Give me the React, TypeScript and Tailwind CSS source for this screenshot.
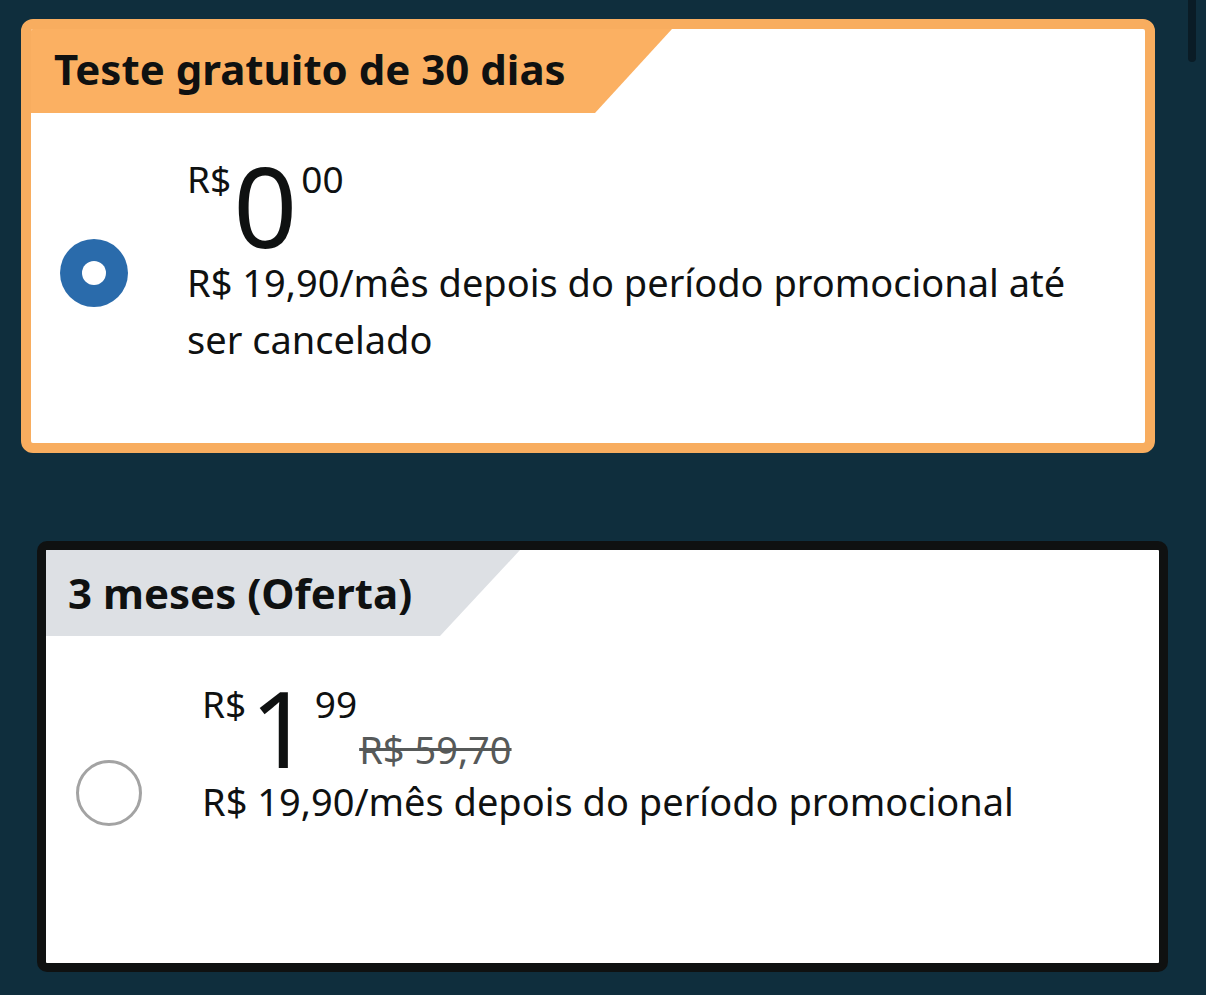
import React from 'react';

const font = { fontFamily: '"Noto Sans", "Open Sans", sans-serif' };

const Radio: React.FC<{ checked?: boolean }> = ({ checked }) =>
  checked ? (
    <div className="w-[68px] h-[68px] rounded-full bg-[#2a6bab] flex items-center justify-center shrink-0">
      <div className="w-[24px] h-[24px] rounded-full bg-white" />
    </div>
  ) : (
    <div className="w-[66px] h-[66px] rounded-full border-[3px] border-[#a3a3a3] bg-white shrink-0" />
  );

export default function App() {
  return (
    <div className="min-h-[995px] w-[1206px] bg-[#0f2e3d] flex text-[#0f1111]" style={font}>
      <div className="flex flex-col">
        {/* free trial card */}
        <div className="ml-[21px] mt-[19px] w-[1134px] h-[434px] rounded-[12px] border-[10px] border-[#f8ad5f] bg-white overflow-hidden">
          <div className="h-[84px] w-[641px] bg-[#fbb062] [clip-path:polygon(0_0,100%_0,calc(100%-77px)_100%,0_100%)] flex items-center pl-[23px] pb-[4px]">
            <span className="text-[42px] font-bold leading-none">Teste gratuito de 30 dias</span>
          </div>
          <div className="flex pl-[29px] pt-[44px]">
            <div className="mt-[82px]">
              <Radio checked />
            </div>
            <div className="ml-[59px] flex flex-col">
              <div className="flex items-start">
                <span className="text-[37px] leading-none mt-[3px]">R$</span>
                <span className="text-[112px] leading-[0.78] mt-[4px] ml-[2px]">0</span>
                <span className="text-[37px] leading-none mt-[3px] ml-[4px]">00</span>
              </div>
              <p className="text-[38px] leading-[57px] w-[900px] mt-[6px]">
                R$ 19,90/mês depois do período promocional até ser cancelado
              </p>
            </div>
          </div>
        </div>

        {/* 3 months card */}
        <div className="ml-[37px] mt-[88px] w-[1131px] h-[431px] rounded-[10px] border-[9px] border-[#0f1111] bg-white overflow-hidden">
          <div className="h-[86px] w-[474px] bg-[#dde0e4] [clip-path:polygon(0_0,100%_0,calc(100%-80px)_100%,0_100%)] flex items-center pl-[22px]">
            <span className="text-[42px] font-bold leading-none">3 meses (Oferta)</span>
          </div>
          <div className="flex pl-[30px] pt-[46px]">
            <div className="mt-[78px]">
              <Radio />
            </div>
            <div className="ml-[60px] flex flex-col">
              <div className="flex items-start">
                <span className="text-[37px] leading-none mt-[3px]">R$</span>
                <span className="text-[106px] leading-[0.78] mt-[4px] ml-[4px]">1</span>
                <span className="text-[37px] leading-none mt-[3px] ml-[4px]">99</span>
                <span className="self-end text-[38px] leading-none text-[#565959] line-through ml-[2px] mb-[1px]">
                  R$ 59,70
                </span>
              </div>
              <p className="text-[38px] leading-[57px] mt-[4px]">
                R$ 19,90/mês depois do período promocional
              </p>
            </div>
          </div>
        </div>
      </div>
      <div className="ml-auto mr-[10px] w-[8px] h-[62px] rounded-b-full bg-[#0a1c26]" />
    </div>
  );
}
